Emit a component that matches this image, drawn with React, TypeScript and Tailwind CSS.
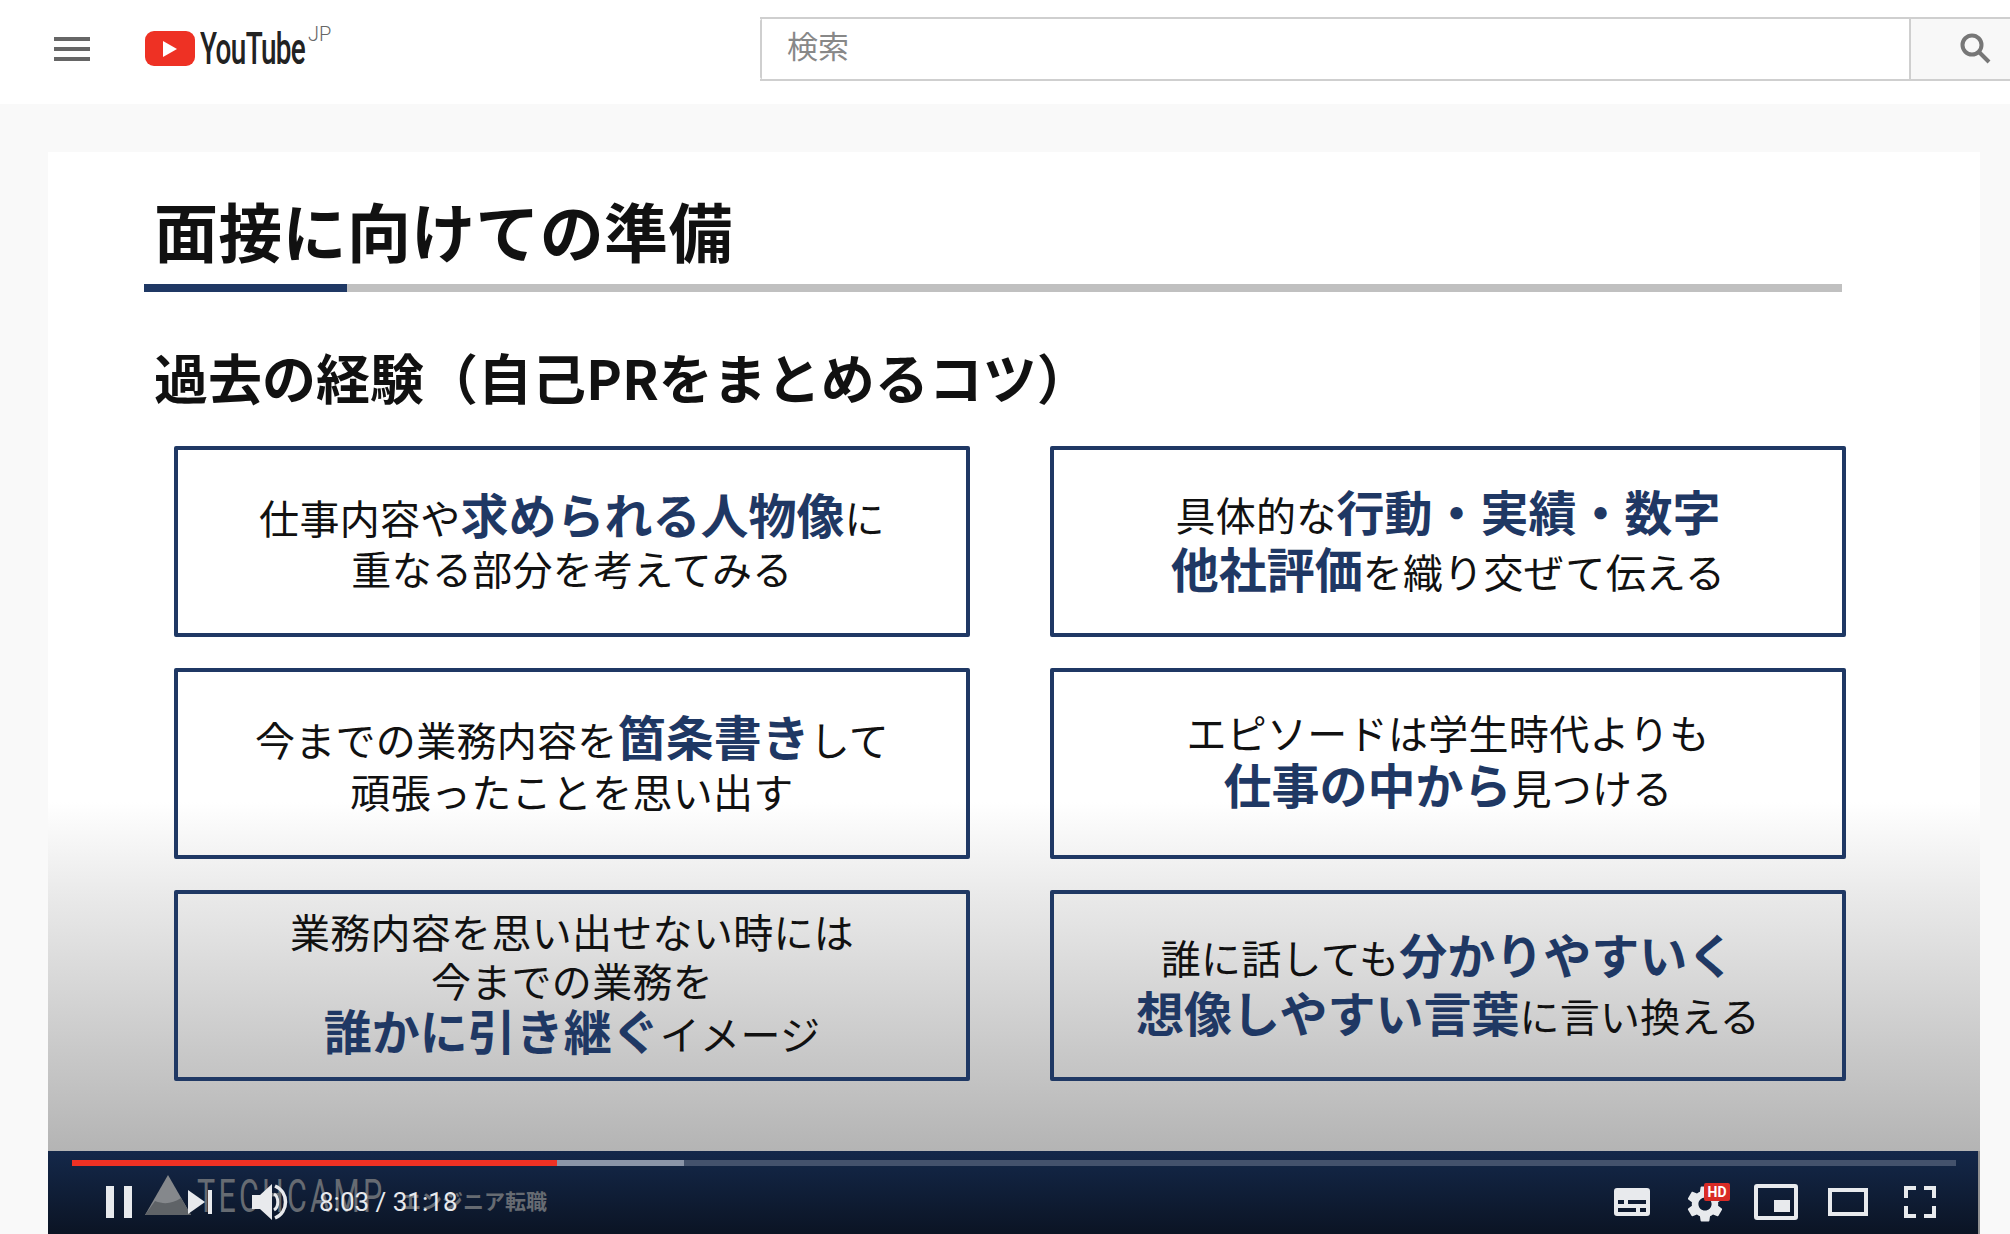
import { MdSettings } from 'react-icons/md'

const jp = "font-['Noto_Sans_CJK_JP','Noto_Sans',sans-serif]"

function B({ children }: { children: React.ReactNode }) {
  return <span className="text-[48px] font-bold tracking-normal text-[#1f3864]">{children}</span>
}

function Box({ lines, leading, pad }: { lines: React.ReactNode[]; leading: string; pad: string }) {
  return (
    <div className={`flex h-[191px] flex-col items-center justify-center rounded-[2px] border-[4px] border-[#1f3864] text-center text-[40px] tracking-[0.3px] text-[#111] ${pad}`}>
      {lines.map((line, i) => (
        <div key={i} className={`whitespace-nowrap ${leading}`}>
          {line}
        </div>
      ))}
    </div>
  )
}

function Header() {
  return (
    <div className="flex h-[104px] items-center bg-white pb-[7px]">
      <div className="ml-[54px] flex w-[36px] flex-col gap-[6px]">
        <div className="h-[4px] bg-[#666]" />
        <div className="h-[4px] bg-[#666]" />
        <div className="h-[4px] bg-[#666]" />
      </div>
      <div className="ml-[55px] flex h-[35px] w-[50px] items-center justify-center rounded-[9px] bg-[#ee3124]">
        <svg width="14" height="16" viewBox="0 0 14 16">
          <path d="M0 0 L14 8 L0 16 Z" fill="#fff" />
        </svg>
      </div>
      <div className="relative ml-[5px] w-[103px] self-center">
        <span className="block origin-left scale-x-[0.62] whitespace-nowrap font-['Roboto',sans-serif] text-[45px] leading-[40px] font-medium tracking-[-1px] text-[#222]">
          YouTube
        </span>
        <span className="absolute top-[-5px] left-[108px] font-['Roboto',sans-serif] text-[20px] leading-[20px] font-light text-[#666]">
          JP
        </span>
      </div>
      <div className="ml-[457px] flex h-[64px] flex-1 border-y-2 border-[#cfcfcf]">
        <div className={`flex flex-1 items-center rounded-l-[2px] border-x-2 border-[#cfcfcf] bg-white pb-[6px] pl-[25px] text-[31px] text-[#888] ${jp}`}>
          検索
        </div>
        <div className="flex w-[99px] items-center bg-[#f8f8f8] pl-[49px]">
          <svg width="32" height="32" viewBox="0 0 32 32" fill="none" stroke="#777" strokeWidth="4">
            <circle cx="12" cy="12" r="9.5" />
            <path d="M19 19 L29 29" />
          </svg>
        </div>
      </div>
    </div>
  )
}

function Controls() {
  return (
    <div className="relative h-[83px] w-[1930px] bg-[linear-gradient(#14284a,#0b1424)]">
      <div className="absolute top-[9px] left-[24px] h-[6px] w-[1884px] bg-[#44526c]">
        <div className="h-full w-[612px] bg-[#8b95a8]">
          <div className="h-full w-[485px] bg-[#ee3124]" />
        </div>
      </div>

      {/* watermark burned into the slide */}
      <div className="absolute top-[24px] left-[97px] flex h-[40px] items-end text-[#666b72]">
        <svg width="46" height="40" viewBox="0 0 46 40">
          <path d="M23 0 L46 40 L0 40 Z" fill="#85888c" />
          <path d="M0 40 L10 26 C20 30 28 28 36 23 L46 40 Z" fill="#5f6367" />
        </svg>
        <span className="ml-[6px] block w-[188px] origin-left scale-x-[0.66] whitespace-nowrap font-['Roboto',sans-serif] text-[46px] leading-[38px] tracking-[5px]">
          TECHCAMP
        </span>
        <span className={`ml-[15px] mb-[2px] whitespace-nowrap text-[21px] leading-[26px] font-bold ${jp}`}>
          エンジニア転職
        </span>
      </div>

      <div className="absolute inset-x-0 top-[35px] flex h-[32px] items-center text-[#e8eaed]">
        <div className="ml-[58px] flex h-[32px] gap-[10px]">
          <div className="w-[8px] bg-[#e8eaed]" />
          <div className="w-[8px] bg-[#e8eaed]" />
        </div>
        <svg className="ml-[56px]" width="24" height="24" viewBox="0 0 24 24" fill="#e8eaed">
          <path d="M0 0 L17 12 L0 24 Z" />
          <rect x="20" y="0" width="4" height="24" />
        </svg>
        <svg className="ml-[40px]" width="36" height="38" viewBox="0 0 36 38" fill="none">
          <path d="M0 12 H8 L20 1 V37 L8 26 H0 Z" fill="#e8eaed" />
          <path d="M22 11 C27 14 27 24 22 27" stroke="#e8eaed" strokeWidth="3" />
          <path d="M23 3 C37 9 37 29 23 35" stroke="#e8eaed" strokeWidth="3.5" />
        </svg>
        <span className="ml-[31px] whitespace-nowrap font-['Roboto',sans-serif] text-[26px] leading-[32px]">
          8:03 / 31:18
        </span>

        <div className="ml-auto flex items-center">
          <svg width="36" height="28" viewBox="0 0 36 28">
            <path
              fillRule="evenodd"
              fill="#e8eaed"
              d="M3 0 H33 A3 3 0 0 1 36 3 V25 A3 3 0 0 1 33 28 H3 A3 3 0 0 1 0 25 V3 A3 3 0 0 1 3 0 Z M4 12 V16 H10 V12 Z M14 12 V16 H32 V12 Z M4 20 V24 H22 V20 Z M26 20 V24 H32 V20 Z"
            />
          </svg>
          <div className="relative ml-[38px] h-[36px] w-[36px]">
            <MdSettings className="absolute top-[-2px] left-[-5px] h-[44px] w-[44px] text-[#e8eaed]" />
            <div className="absolute top-[-1px] left-[16px] flex h-[18px] w-[26px] items-center justify-center rounded-[2px] bg-[#d92b26] font-['Roboto',sans-serif] text-[14px] leading-none font-bold text-white">
              HD
            </div>
          </div>
          <div className="relative ml-[30px] h-[36px] w-[44px] rounded-[3px] border-[4px] border-[#e8eaed]">
            <div className="absolute right-[4px] bottom-[4px] h-[12px] w-[16px] bg-[#e8eaed]" />
          </div>
          <div className="ml-[30px] h-[28px] w-[40px] border-[4px] border-[#e8eaed]" />
          <svg className="mr-[42px] ml-[36px]" width="32" height="32" viewBox="0 0 32 32" fill="none" stroke="#e8eaed" strokeWidth="4">
            <path d="M12 2 H2 V12 M20 2 H30 V12 M2 20 V30 H12 M30 20 V30 H20" />
          </svg>
        </div>
      </div>
    </div>
  )
}

export default function App() {
  return (
    <div className={`flex h-[1234px] w-[2010px] flex-col overflow-hidden bg-[#f9f9f9] ${jp}`}>
      <Header />
      <div className="pt-[48px] pl-[48px]">
        <div className="w-[1932px] bg-[#8f8f8f]">
          <div className="h-[999px] bg-[linear-gradient(#fff_0,#fff_650px,#e8e8e8_750px,#b4b4b4_999px)] pt-[37px] pl-[96px]">
            <div className="ml-[10px] text-[64px] leading-[80px] font-bold tracking-[0.3px] text-[#111]">面接に向けての準備</div>
            <div className="mt-[15px] h-[8px] w-[1698px] bg-[#c0c0c0]">
              <div className="h-full w-[203px] bg-[#1f3864]" />
            </div>
            <div className="mt-[50px] ml-[10px] whitespace-nowrap text-[54px] leading-[70px] font-bold text-[#111]">
              過去の経験（自己PRをまとめるコツ）
            </div>
            <div className="mt-[34px] ml-[30px] grid w-[1672px] grid-cols-2 gap-x-[80px] gap-y-[31px]">
              <Box
                leading="leading-[51px]"
                pad="pb-[2px]"
                lines={[
                  <>仕事内容や<B>求められる人物像</B>に</>,
                  <>重なる部分を考えてみる</>,
                ]}
              />
              <Box
                leading="leading-[53px]"
                pad="pb-[2px]"
                lines={[
                  <>具体的な<B>行動・実績・数字</B></>,
                  <><B>他社評価</B>を織り交ぜて伝える</>,
                ]}
              />
              <Box
                leading="leading-[52px]"
                pad="pb-[2px]"
                lines={[
                  <>今までの業務内容を<B>箇条書き</B>して</>,
                  <>頑張ったことを思い出す</>,
                ]}
              />
              <Box
                leading="leading-[51px]"
                pad="pb-[7px]"
                lines={[
                  <>エピソードは学生時代よりも</>,
                  <><B>仕事の中から</B>見つける</>,
                ]}
              />
              <Box
                leading="leading-[49px]"
                pad="pb-[6px]"
                lines={[
                  <>業務内容を思い出せない時には</>,
                  <>今までの業務を</>,
                  <><B>誰かに引き継ぐ</B>イメージ</>,
                ]}
              />
              <Box
                leading="leading-[54px]"
                pad="pb-[4px]"
                lines={[
                  <>誰に話しても<B>分かりやすいく</B></>,
                  <><B>想像しやすい言葉</B>に言い換える</>,
                ]}
              />
            </div>
          </div>
          <Controls />
        </div>
      </div>
    </div>
  )
}
